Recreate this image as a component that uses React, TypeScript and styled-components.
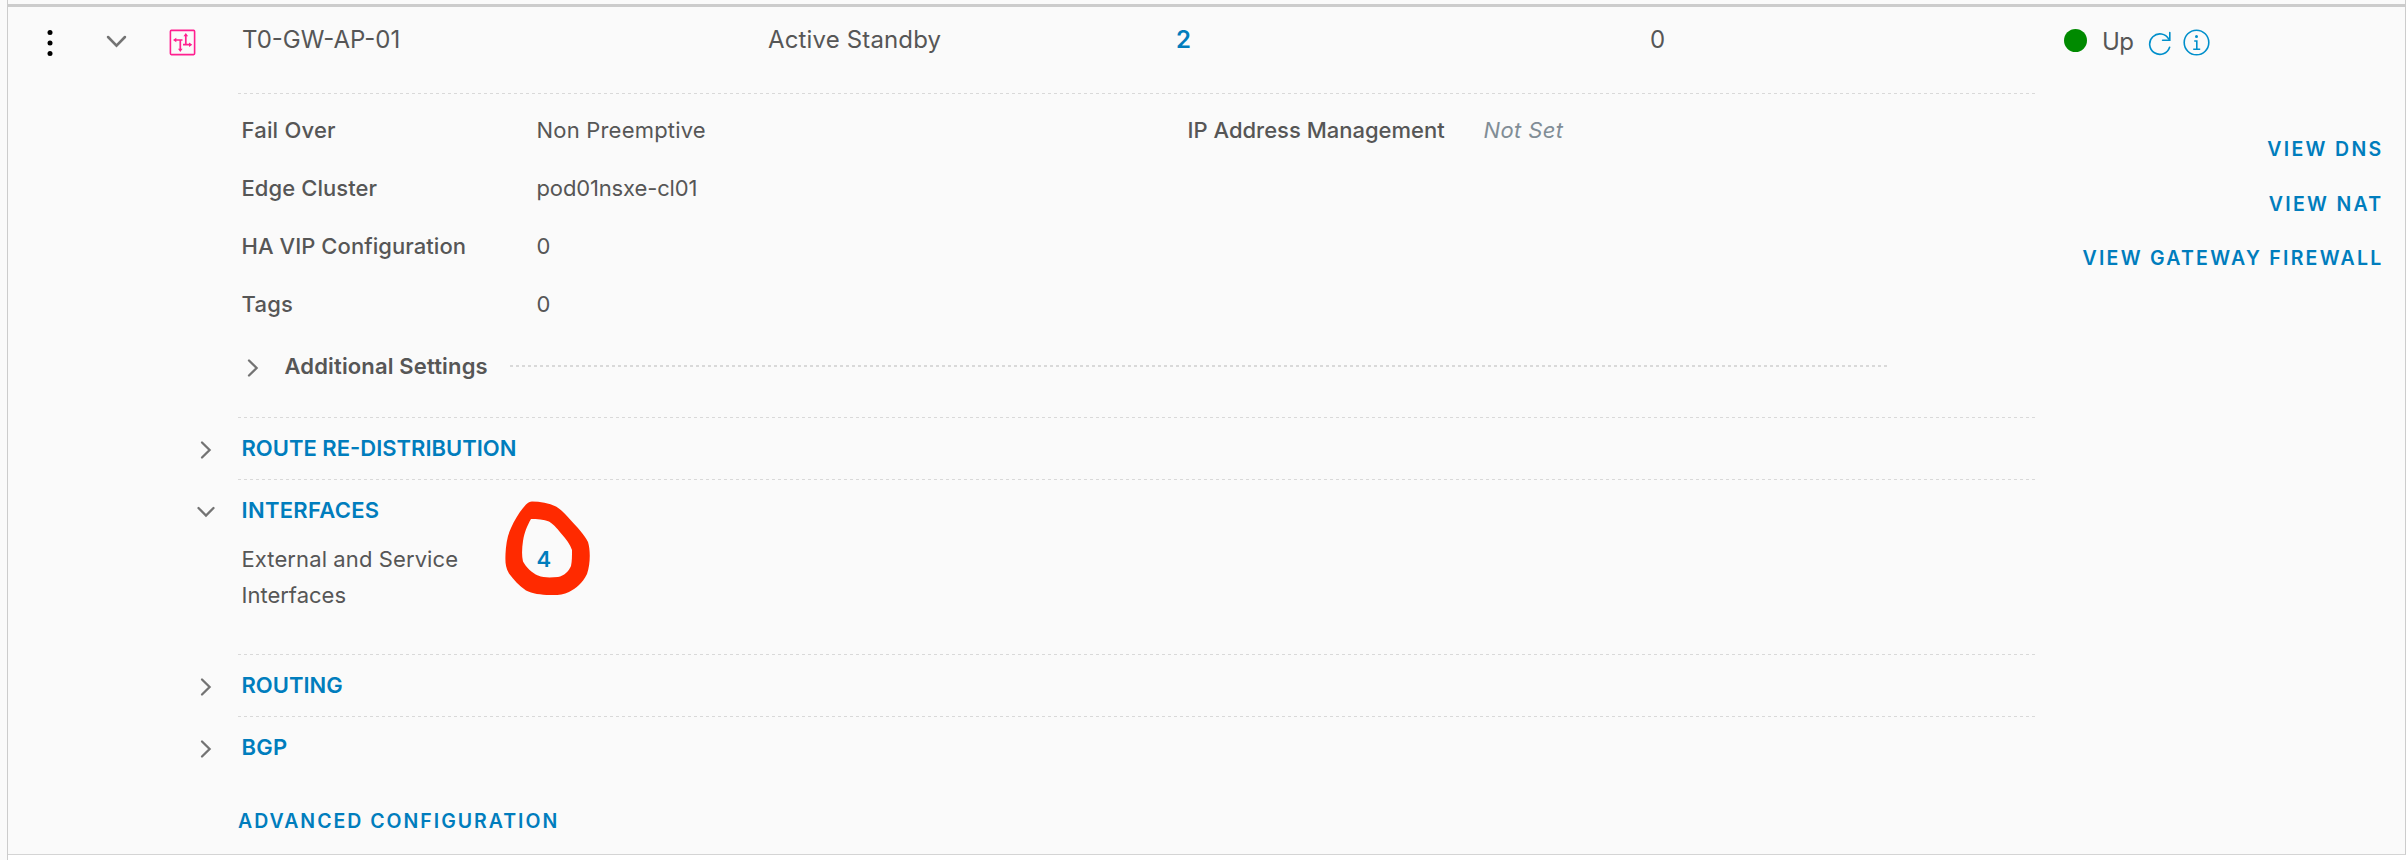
import React from "react";
import styled, { createGlobalStyle } from "styled-components";

const colors = {
  page: "#fafafa",
  text: "#565656",
  link: "#007dbd",
  line: "#cccccc",
  dash: "#d9d9d9",
  icon: "#737373",
  pink: "#ff1f8f",
  blue: "#008fcb",
};

const GlobalStyle = createGlobalStyle`
  * { box-sizing: border-box; }
  body {
    margin: 0;
    background: #ffffff;
    color: ${colors.text};
    font-family: Inter, "Liberation Sans", sans-serif;
    font-size: 22px;
  }
`;

const Page = styled.div`
  display: flex;
  height: 860px;
  overflow: hidden;
`;

const Gutter = styled.div`
  width: 8px;
  flex: none;
  background: ${colors.page};
  border-right: 1px solid ${colors.line};
`;

const Panel = styled.main`
  flex: 1;
  height: 855px;
  display: flex;
  flex-direction: column;
  background: ${colors.page};
  border-right: 1px solid ${colors.line};
  border-bottom: 1px solid #d4d4d4;
`;

const TopRule = styled.div`
  height: 3px;
  margin-top: 4px;
  background: ${colors.line};
  flex: none;
`;

const GatewayRow = styled.header`
  display: grid;
  grid-template-columns: 83px 51px 100px 526px 408px 474px 413px 1fr;
  height: 86px;
  flex: none;
  font-size: 24px;
  line-height: 66px;
`;

const IconCell = styled.div<{ $start?: number; $drop?: number }>`
  display: flex;
  height: 66px;
  align-items: center;
  justify-content: ${(p) => (p.$start ? "flex-start" : "center")};
  padding-left: ${(p) => p.$start ?? 0}px;
  padding-top: ${(p) => p.$drop ?? 5}px;
`;

const Text = styled.span<{ $track?: number }>`
  letter-spacing: ${(p) => p.$track ?? 0}px;
  white-space: nowrap;
`;

const CountLink = styled.a`
  color: ${colors.link};
  font-weight: 600;
`;

const Status = styled.div`
  display: flex;
  align-items: center;
  height: 66px;
`;

const StatusDot = styled.span`
  width: 23px;
  height: 23px;
  margin: 1px 15px 0 1px;
  border-radius: 50%;
  background: #008a00;
`;

const StatusLabel = styled.span`
  width: 46px;
  padding-top: 3px;
  letter-spacing: -0.5px;
`;

const StatusIcons = styled.div`
  display: flex;
  gap: 11px;
  padding-top: 5px;
`;

const Columns = styled.div`
  display: flex;
  justify-content: space-between;
`;

const Sections = styled.div`
  width: 1851px;
  margin-left: 178px;
`;

const Section = styled.section`
  display: grid;
  grid-template-columns: 52px 1799px;
`;

const SectionToggle = styled.div`
  height: 62px;
  display: flex;
  align-items: center;
  padding: 4px 0 0 7.5px;
`;

const SectionBody = styled.div<{ $bottom?: number }>`
  padding: 0 0 ${(p) => p.$bottom ?? 0}px 3.5px;
  background: repeating-linear-gradient(
      90deg,
      ${colors.dash} 0 3px,
      transparent 3px 6px
    )
    top left / 100% 1px no-repeat;
`;

const SectionTitle = styled.h2<{ $track?: number }>`
  margin: 1px 0 0;
  height: 61px;
  line-height: 60px;
  font-size: 22px;
  font-weight: 600;
  color: ${colors.link};
  letter-spacing: ${(p) => p.$track ?? 0}px;
`;

const Fields = styled.div`
  padding-top: 8px;
`;

const FieldRow = styled.div`
  display: grid;
  grid-template-columns: 295px 651px 296px 1fr;
  line-height: 58px;
`;

const FieldLabel = styled(Text)`
  font-weight: 500;
`;

const Unset = styled(Text)`
  color: #818d96;
  font-style: italic;
`;

const AdditionalRow = styled.div`
  display: flex;
  align-items: center;
  height: 66px;
  margin-bottom: 18px;
`;

const AdditionalIcon = styled.span`
  display: flex;
  width: 43px;
  padding-top: 3px;
  margin-left: -1px;
`;

const AdditionalTitle = styled(Text)`
  width: 226px;
  padding-left: 1px;
  font-weight: 600;
`;

const DottedRule = styled.div`
  width: 1379px;
  height: 2px;
  background: repeating-linear-gradient(
    90deg,
    ${colors.dash} 0 3px,
    transparent 3px 6px
  );
`;

const InterfaceRow = styled.div`
  display: grid;
  grid-template-columns: 295px 1fr;
  line-height: 36px;
`;

const InterfaceLabel = styled.div`
  display: flex;
  flex-direction: column;
`;

const MarkedValue = styled.div`
  position: relative;
`;

const Ring = styled.svg`
  position: absolute;
  left: -46.5px;
  top: -51px;
`;

const Actions = styled.nav`
  display: flex;
  flex-direction: column;
  align-items: flex-end;
  padding: 29px 21.5px 0 0;
`;

const ActionLink = styled.a<{ $track?: number }>`
  color: ${colors.link};
  font-size: 19.5px;
  font-weight: 600;
  line-height: 54.5px;
  letter-spacing: ${(p) => p.$track ?? 2.3}px;
`;

const AdvancedBar = styled.div`
  padding: 16px 0 0 52px;
`;

const KebabIcon = () => (
  <svg width="6" height="28" viewBox="0 0 6 28" fill="#000">
    <circle cx="3" cy="3.5" r="2.5" />
    <circle cx="3" cy="14" r="2.5" />
    <circle cx="3" cy="24.5" r="2.5" />
  </svg>
);

const Chevron = ({ open, large }: { open?: boolean; large?: boolean }) => {
  const size = large ? 27 : 24;
  return (
    <svg
      width={size}
      height={size}
      viewBox="0 0 24 24"
      fill="none"
      stroke={colors.icon}
      strokeWidth="2.3"
      strokeLinecap="round"
      strokeLinejoin="miter"
    >
      <path d={open ? "M4.5 8 12 15.6 19.5 8" : "M8 4.5 15.6 12 8 19.5"} />
    </svg>
  );
};

const RouterIcon = () => (
  <svg width="27" height="27" viewBox="0 0 27 27" fill="none" stroke={colors.pink}>
    <rect x="1.4" y="1.4" width="24.2" height="24.2" rx="1" strokeWidth="1.6" />
    <path d="M6 11h7.5M11.3 11v9M16.8 15.5V7M14 15.7h7.5" strokeWidth="1.7" />
    <path
      d="M4 11l3.300-2.300v4.600zM11.300 23l-2.300-3.300h4.600zM16.800 4l-2.300 3.300h4.600zM23.300 15.700l-3.300-2.300v4.600z"
      fill={colors.pink}
      stroke="none"
    />
  </svg>
);

const RefreshIcon = () => (
  <svg width="24" height="27" viewBox="0 0 24 27" fill="none" stroke={colors.blue} strokeWidth="1.6">
    <path d="M21.6 18.2A10.2 10.2 0 1 1 20.8 10.2" strokeLinecap="round" />
    <path d="M14.6 11.2h7.2V3.6" strokeLinecap="round" />
  </svg>
);

const InfoIcon = () => (
  <svg width="27" height="27" viewBox="0 0 27 27" fill="none" stroke={colors.blue} strokeWidth="1.6">
    <circle cx="13.5" cy="13.5" r="12.3" />
    <circle cx="13.5" cy="7.6" r="1.5" fill={colors.blue} stroke="none" />
    <path d="M11.2 12h2.6v8M10.2 20.3h7" />
  </svg>
);

const fields = [
  { label: "Fail Over", labelTrack: 0.2, value: "Non Preemptive", valueTrack: 0.2 },
  { label: "Edge Cluster", labelTrack: 0.08, value: "pod01nsxe-cl01", valueTrack: -0.14 },
  { label: "HA VIP Configuration", labelTrack: 0.06, value: "0" },
  { label: "Tags", labelTrack: 0.2, value: "0" },
];

export default function App() {
  return (
    <>
      <GlobalStyle />
      <Page>
        <Gutter />
        <Panel>
          <TopRule />
          <GatewayRow>
            <IconCell><KebabIcon /></IconCell>
            <IconCell $drop={2}><Chevron open large /></IconCell>
            <IconCell $start={27}><RouterIcon /></IconCell>
            <Text>T0-GW-AP-01</Text>
            <Text $track={0.15}>Active Standby</Text>
            <CountLink>2</CountLink>
            <Text>0</Text>
            <Status>
              <StatusDot />
              <StatusLabel>Up</StatusLabel>
              <StatusIcons>
                <RefreshIcon />
                <InfoIcon />
              </StatusIcons>
            </Status>
          </GatewayRow>
          <Columns>
            <Sections>
              <Section>
                <span />
                <SectionBody>
                  <Fields>
                    {fields.map((f, i) => (
                      <FieldRow key={f.label}>
                        <FieldLabel $track={f.labelTrack}>{f.label}</FieldLabel>
                        <Text $track={f.valueTrack}>{f.value}</Text>
                        {i === 0 && <FieldLabel>IP Address Management</FieldLabel>}
                        {i === 0 && <Unset $track={0.4}>Not Set</Unset>}
                      </FieldRow>
                    ))}
                  </Fields>
                  <AdditionalRow>
                    <AdditionalIcon><Chevron /></AdditionalIcon>
                    <AdditionalTitle $track={0.15}>Additional Settings</AdditionalTitle>
                    <DottedRule />
                  </AdditionalRow>
                </SectionBody>
              </Section>
              <Section>
                <SectionToggle><Chevron /></SectionToggle>
                <SectionBody>
                  <SectionTitle>ROUTE RE-DISTRIBUTION</SectionTitle>
                </SectionBody>
              </Section>
              <Section>
                <SectionToggle><Chevron open /></SectionToggle>
                <SectionBody $bottom={41}>
                  <SectionTitle $track={0.3}>INTERFACES</SectionTitle>
                  <InterfaceRow>
                    <InterfaceLabel>
                      <Text $track={0.1}>External and Service</Text>
                      <Text>Interfaces</Text>
                    </InterfaceLabel>
                    <MarkedValue>
                      <CountLink>4</CountLink>
                      <Ring width="120" height="120" viewBox="0 0 120 120">
                        <path
                          fill="#ff2a00"
                          fillRule="evenodd"
                          d="M42 11.5C50 11.5 59 13 66 16.5C72 20 76 25 81 30.5C87 37 94 44 98 52C100.5 60 100.5 74 97 84C92 94 86 98 79 102C73 105 66 105.3 60 105C51 105 42 103.5 36 100.5C29 96 24 90 19 83.5C15 77 15.3 71 15.5 64C16 55 17 46 21 38C25 29 30 21 36 14.5C38 12.5 40 11.5 42 11.5ZM41 29C47 29 54 29.5 59 31.5C65 35 68 40 72 44.5C76 49 80 54 82 60C82 66 82 71 81 76C79 81 74 86 68 87C61 87.5 54 88 48 85.5C42 83 36 77 33 71.5C31.5 65 32 58 33 51C34.5 42 37 36 41 29Z"
                        />
                      </Ring>
                    </MarkedValue>
                  </InterfaceRow>
                </SectionBody>
              </Section>
              <Section>
                <SectionToggle><Chevron /></SectionToggle>
                <SectionBody>
                  <SectionTitle>ROUTING</SectionTitle>
                </SectionBody>
              </Section>
              <Section>
                <SectionToggle><Chevron /></SectionToggle>
                <SectionBody>
                  <SectionTitle $track={0.2}>BGP</SectionTitle>
                </SectionBody>
              </Section>
              <AdvancedBar>
                <ActionLink $track={1.98}>ADVANCED CONFIGURATION</ActionLink>
              </AdvancedBar>
            </Sections>
            <Actions>
              <ActionLink>VIEW DNS</ActionLink>
              <ActionLink>VIEW NAT</ActionLink>
              <ActionLink $track={2.25}>VIEW GATEWAY FIREWALL</ActionLink>
            </Actions>
          </Columns>
        </Panel>
      </Page>
    </>
  );
}
